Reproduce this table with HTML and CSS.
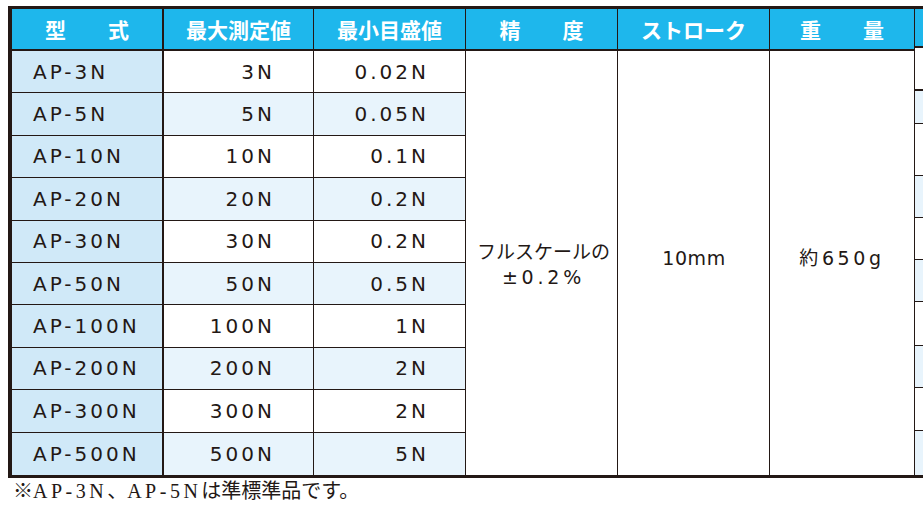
FILE: index.html
```html
<!DOCTYPE html>
<html lang="ja">
<head>
<meta charset="utf-8">
<title>仕様表</title>
<link rel="stylesheet" href="styles.css">
</head>
<body>
<div class="page">
  <div class="sheet">
    <div class="spec">
      <div class="th th-first">型　　式</div>
      <div class="th">最大測定値</div>
      <div class="th">最小目盛値</div>
      <div class="th">精　　度</div>
      <div class="th">ストローク</div>
      <div class="th">重　　量</div>

      <div class="td model">AP-3N</div>
      <div class="td num">3N</div>
      <div class="td num">0.02N</div>
      <div class="td merge acc"><span class="jp">フルスケールの</span><span>±0.2%</span></div>
      <div class="td merge stroke">10mm</div>
      <div class="td merge weight">約650g</div>

      <div class="td model alt">AP-5N</div>
      <div class="td num alt">5N</div>
      <div class="td num alt">0.05N</div>

      <div class="td model">AP-10N</div>
      <div class="td num">10N</div>
      <div class="td num">0.1N</div>

      <div class="td model alt">AP-20N</div>
      <div class="td num alt">20N</div>
      <div class="td num alt">0.2N</div>

      <div class="td model">AP-30N</div>
      <div class="td num">30N</div>
      <div class="td num">0.2N</div>

      <div class="td model alt">AP-50N</div>
      <div class="td num alt">50N</div>
      <div class="td num alt">0.5N</div>

      <div class="td model">AP-100N</div>
      <div class="td num">100N</div>
      <div class="td num">1N</div>

      <div class="td model alt">AP-200N</div>
      <div class="td num alt">200N</div>
      <div class="td num alt">2N</div>

      <div class="td model">AP-300N</div>
      <div class="td num">300N</div>
      <div class="td num">2N</div>

      <div class="td model alt last">AP-500N</div>
      <div class="td num alt last">500N</div>
      <div class="td num alt last">5N</div>
    </div>
    <div class="side">
      <div class="side-head"></div>
      <div class="side-cell s1"></div>
      <div class="side-cell s2 light"></div>
      <div class="side-cell s3"></div>
      <div class="side-cell s4 light"></div>
      <div class="side-cell s5"></div>
      <div class="side-cell s6 light"></div>
      <div class="side-cell s7"></div>
      <div class="side-cell s8 light"></div>
      <div class="side-cell s9"></div>
      <div class="side-cell s10 light"></div>
    </div>
  </div>
  <p class="note">※<span class="lat">AP-3N</span>、<span class="lat">AP-5N</span>は準標準品です。</p>
</div>
</body>
</html>
```

FILE: styles.css
```css
html, body {
  margin: 0;
  padding: 0;
  background: #ffffff;
}

body {
  width: 923px;
  height: 505px;
  overflow: hidden;
  color: #231815;
}

.page {
  padding: 6px 0 0 8px;
}

.sheet {
  display: flex;
  align-items: flex-start;
  width: 960px;
}

.spec {
  display: grid;
  grid-template-columns: 152px 150px 152px 152px 152px 145px;
  grid-template-rows: 42px repeat(10, 42.4px);
  border-top: 3px solid #231815;
  border-left: 4px solid #231815;
  border-bottom: 3px solid #231815;
  flex: none;
}

.th {
  display: flex;
  align-items: center;
  justify-content: center;
  background: #1eb7ec;
  color: #ffffff;
  font-family: "Noto Sans CJK JP", "Noto Sans", sans-serif;
  font-weight: 700;
  font-size: 21px;
  border-right: 1px solid #231815;
  border-bottom: 2px solid #231815;
  padding-bottom: 1px;
  box-sizing: border-box;
}

.th-first {
  border-right-width: 2px;
}

.td {
  display: flex;
  align-items: center;
  box-sizing: border-box;
  border-right: 1px solid #231815;
  border-bottom: 1px solid #231815;
  background: #ffffff;
  font-family: "DejaVu Sans", "Noto Sans CJK JP", sans-serif;
  font-size: 20px;
  letter-spacing: 3px;
  line-height: 1;
}

.td.last {
  border-bottom: 0;
}

.model {
  background: #d0e9f8;
  border-right-width: 2px;
  padding-left: 21px;
}

.num {
  justify-content: flex-end;
}

.num:nth-child(3n+2) {
  padding-right: 38px;
}

.num:nth-child(3n) {
  padding-right: 36px;
}

.num.alt {
  background: #e8f4fc;
}

.merge {
  grid-row: span 10;
  border-bottom: 0;
  justify-content: center;
  font-size: 19px;
}

.acc {
  flex-direction: column;
  padding-top: 2px;
  padding-left: 4px;
  gap: 8px;
  letter-spacing: 3.8px;
}

.acc .jp {
  font-family: "Noto Sans CJK JP", sans-serif;
  font-size: 19px;
  letter-spacing: 0;
}

.stroke {
  letter-spacing: 0.6px;
  padding-bottom: 8px;
  padding-left: 1px;
}

.weight {
  letter-spacing: 3.6px;
  padding-bottom: 8px;
}

.side {
  display: grid;
  grid-template-rows: 39px 43px 33px 52px 42px 42px 42px 44px 42px 43px 44px;
  width: 30px;
  border-top: 3px solid #231815;
  border-bottom: 3px solid #231815;
  border-left: 1px solid #231815;
  margin-left: -1px;
  flex: none;
}

.side-head {
  background: #1eb7ec;
  border-bottom: 2px solid #231815;
}

.side-cell {
  background: #ffffff;
  border-bottom: 1px solid #231815;
}

.side-cell.s1 {
  border-bottom-width: 2px;
}

.side-cell.s10 {
  border-bottom: 0;
}

.side-cell.light {
  background: #e8f4fc;
}

.note {
  margin: 2px 0 0 5px;
  font-family: "Liberation Serif", "Noto Sans CJK JP", serif;
  font-size: 20px;
  line-height: 22px;
  color: #231815;
}

.note .lat {
  letter-spacing: 3.5px;
}
```
